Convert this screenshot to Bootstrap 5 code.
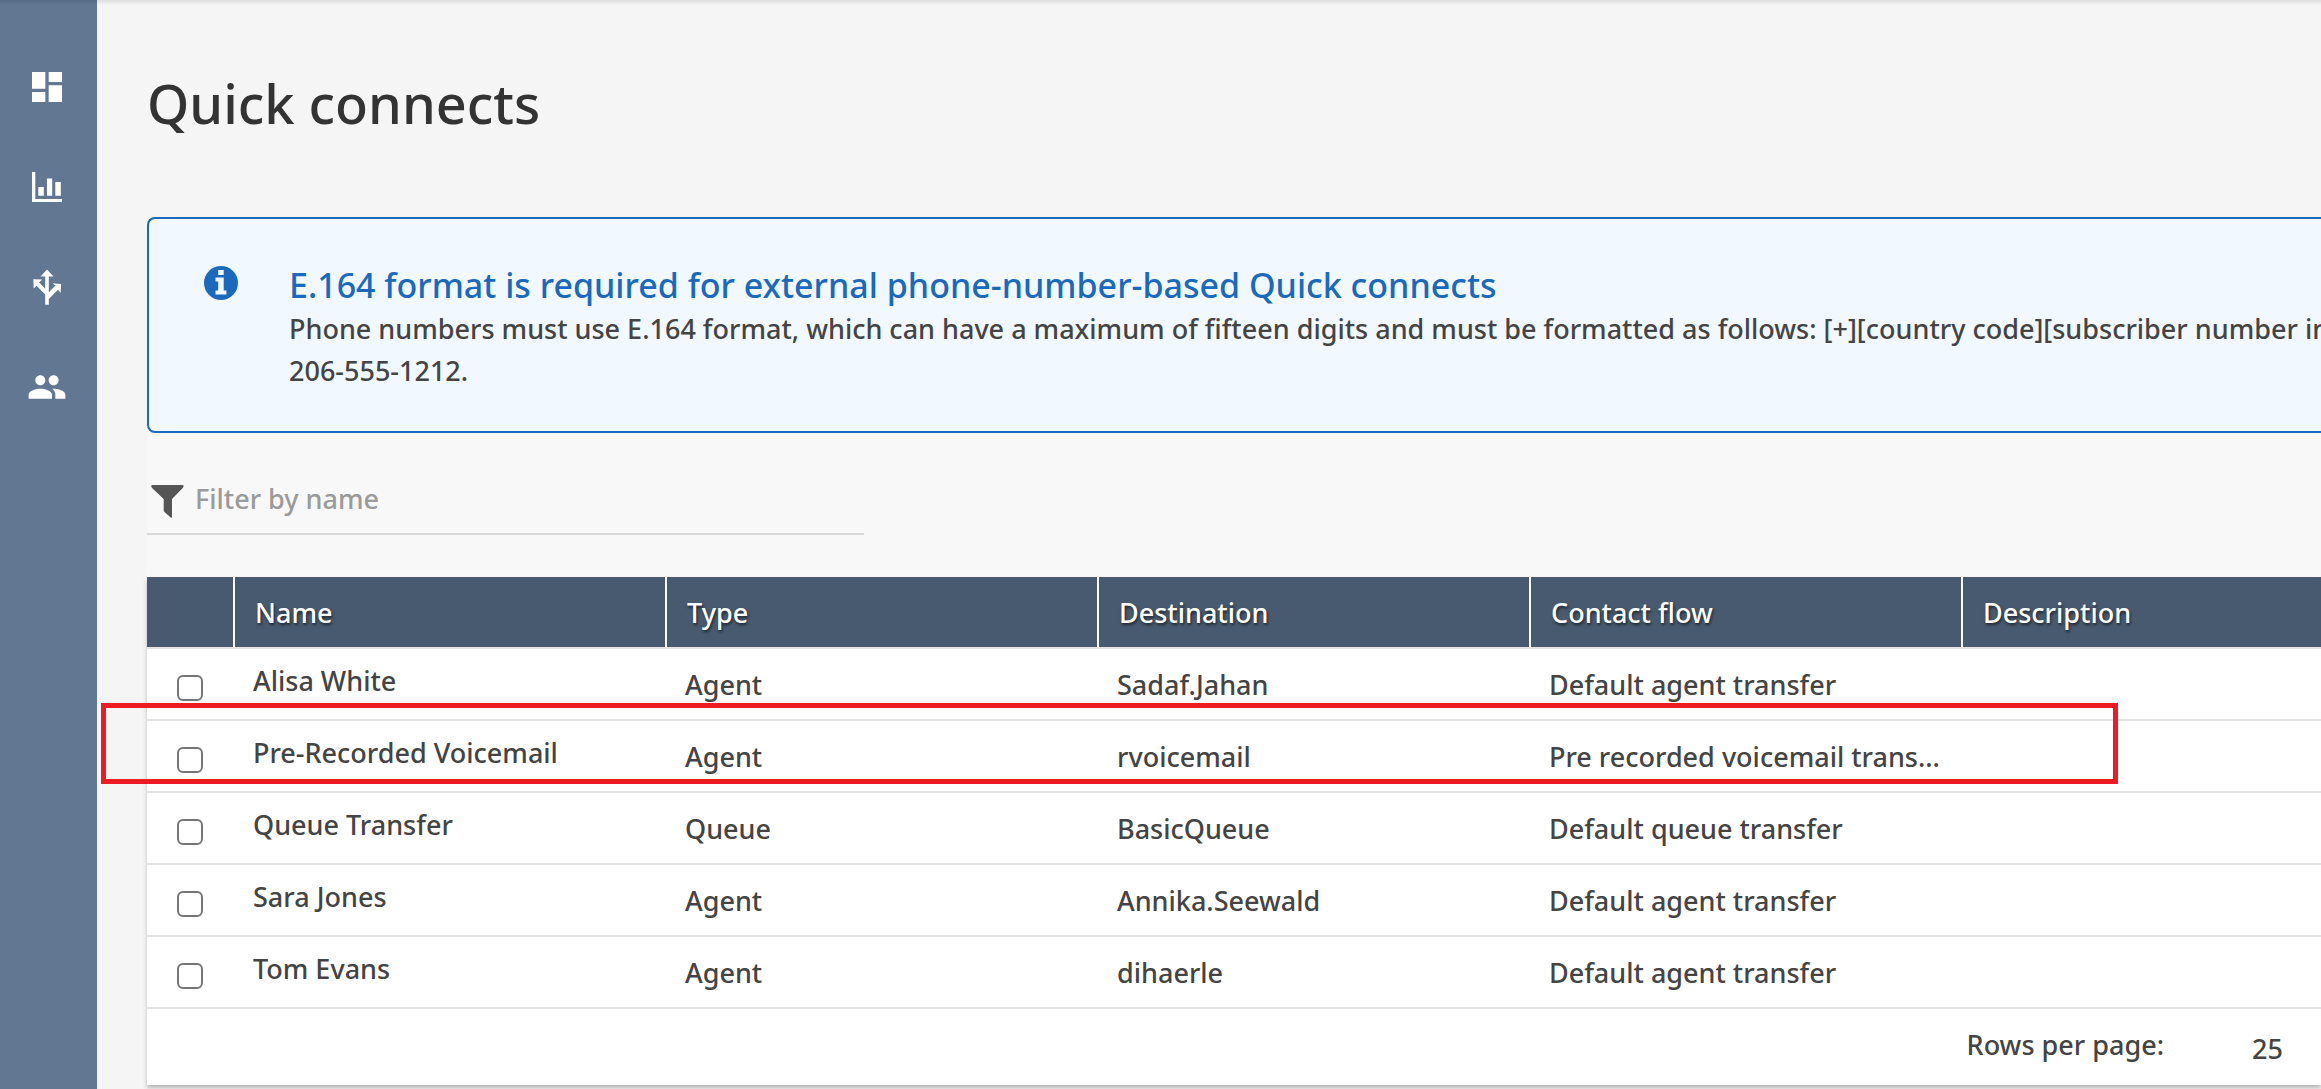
<!DOCTYPE html>
<html lang="en">
<head>
<meta charset="utf-8">
<meta name="viewport" content="width=device-width, initial-scale=1">
<title>Quick connects</title>
<link href="https://cdn.jsdelivr.net/npm/bootstrap@5.3.0/dist/css/bootstrap.min.css" rel="stylesheet">
<style>
  body { font-family: "Noto Sans", "Open Sans", sans-serif; font-size: 27px; font-weight: 500; line-height: 42px; color: #444; background: #f5f5f5; }
  .topbar-shadow { position: absolute; inset: 0 0 auto 0; height: 5px; background: linear-gradient(rgba(0,0,0,.1), rgba(0,0,0,0)); z-index: 5; }
  .side-nav { width: 97px; background: #617792; padding: 37px 3px 0 0; }
  .side-nav .nav-link { height: 100px; color: #fff; }
  .side-nav svg { width: 40px; height: 40px; fill: currentColor; }
  .page-main { min-width: 0; padding-left: 50px; }
  .page-title { font-size: 54px; line-height: 70px; font-weight: 500; color: #333; padding-top: 68px; margin-bottom: 79px; }
  .panel-area { background: #f8f8f8; }
  .notice { background: #f1f8ff; border: 2px solid #1a69bd; border-right: 0; border-radius: 8px 0 0 8px; padding: 43px 0 39px 55px; color: #444; margin: 0; gap: 51px; }
  .notice svg { width: 34px; height: 34px; margin-top: 4px; }
  .notice-title { font-size: 34px; line-height: 46px; font-weight: 500; color: #1a69bd; margin: 0; }
  .filter-box { width: 33%; margin-top: 36px; padding: 9px 0 13px 4px; border-bottom: 2px solid #d8d8d8; gap: 11px; }
  .filter-box svg { width: 33px; height: 33px; margin-top: 4px; }
  .filter-box input { font-size: 27px; font-weight: 500; line-height: 42px; height: 42px; padding: 0; color: #444; }
  .filter-box input::placeholder { color: #9a9a9a; }
  .table-panel { margin-top: 42px; background: #fff; box-shadow: 0 3px 4px rgba(0,0,0,.25); }
  .qc-table { table-layout: fixed; border-collapse: separate; border-spacing: 0; margin: 0; width: 100%; }
  .qc-table th { font-weight: 500; color: #fff; background: #485a6f; padding: 15px 20px 13px; text-shadow: 1px 2px 3px rgba(0,0,0,.6); }
  .qc-table th + th { border-left: 2px solid #fff; }
  .qc-table td { border-top: 2px solid #e5e5e5; padding: 15px 20px 13px; vertical-align: top; }
  .qc-table .name-cell { padding-top: 11px; }
  .qc-table .pick-cell { padding: 26px 30px 0; }
  .qc-table .form-check-input { width: 26px; height: 26px; margin: 0; border: 2px solid #767676; border-radius: 6px; }
  .col-pick { width: 86px; }
  .col-data { width: 432px; }
  .table-foot { border-top: 2px solid #e5e5e5; padding: 15px 38px 15px 0; gap: 88px; }
  .table-foot select { font-size: 27px; font-weight: 500; line-height: 42px; padding: 0; width: auto; color: #444; margin-top: 4px; appearance: none; }
  .highlight-frame { position: absolute; left: -46px; right: 203px; top: 126px; height: 81px; border: 5px solid #ed1c24; pointer-events: none; }
</style>
</head>
<body>
<div class="topbar-shadow"></div>
<div class="d-flex min-vh-100 overflow-hidden">
  <nav class="side-nav nav flex-column flex-nowrap flex-shrink-0" aria-label="Main">
    <a class="nav-link d-flex align-items-center justify-content-center p-0" href="#" aria-label="Dashboard">
      <svg viewBox="0 0 24 24"><path d="M3 13h8V3H3v10zm0 8h8v-6H3v6zm10 0h8V11h-8v10zm0-18v6h8V3h-8z"/></svg>
    </a>
    <a class="nav-link d-flex align-items-center justify-content-center p-0" href="#" aria-label="Metrics">
      <svg viewBox="0 0 40 40"><path d="M5 5h3.300v27H35v3H5zM11.300 20h5.500v8.700h-5.500zM20 11.500h5.200v17.200H20zM28.300 15h5.500v13.700h-5.500z"/></svg>
    </a>
    <a class="nav-link d-flex align-items-center justify-content-center p-0" href="#" aria-label="Routing">
      <svg viewBox="0 0 40 40"><path d="M20 2.500l6.500 7h-4.700v15.700l6.700-6.700-3-2.300L34 17l-.300 9-2.700-3.200-9.200 9.200v5.700h-3.600V27.500L9.500 18.800 6.700 21.500 6.300 12.300l8.900.3-3 3 6 6.200V9.500h-4.700z"/></svg>
    </a>
    <a class="nav-link d-flex align-items-center justify-content-center p-0" href="#" aria-label="Users">
      <svg viewBox="0 0 24 24"><path d="M16 11c1.660 0 2.990-1.340 2.990-3S17.660 5 16 5c-1.660 0-3 1.340-3 3s1.340 3 3 3zm-8 0c1.660 0 2.990-1.340 2.990-3S9.660 5 8 5C6.340 5 5 6.340 5 8s1.340 3 3 3zm0 2c-2.330 0-7 1.170-7 3.500V19h14v-2.500c0-2.330-4.670-3.500-7-3.500zm8 0c-.290 0-.620.020-.970.050 1.160.840 1.970 1.970 1.970 3.450V19h6v-2.500c0-2.330-4.670-3.500-7-3.500z"/></svg>
    </a>
  </nav>

  <main class="page-main flex-grow-1">
    <h1 class="page-title">Quick connects</h1>

    <div class="panel-area">
      <div class="alert notice d-flex align-items-start" role="alert">
        <svg class="flex-shrink-0" viewBox="0 0 34 34" aria-hidden="true"><circle cx="17" cy="17" r="17" fill="#1a69bd"/><path fill="#f1f8ff" d="M14.200 4h5.500v5h-5.500zM11.500 11.500h8.200v13h2.700v4H11.500v-4h2.700v-9h-2.700z"/></svg>
        <div class="text-nowrap">
          <h2 class="notice-title">E.164 format is required for external phone-number-based Quick connects</h2>
          <p class="m-0">Phone numbers must use E.164 format, which can have a maximum of fifteen digits and must be formatted as follows: [+][country code][subscriber number incl<br>206-555-1212.</p>
        </div>
      </div>

      <div class="filter-box d-flex align-items-center">
        <svg class="flex-shrink-0" viewBox="0 0 33 33" aria-hidden="true"><path fill="#555" d="M1.500 0h30q1.500 0 1 1.500-.3 1-1 1.700L21 14v18q0 1-1 .8L13.500 27q-.8-.7-.8-1.500V14L1.300 3.200Q.6 2.500.300 1.500 0 0 1.500 0z"/></svg>
        <input type="text" class="form-control border-0 bg-transparent shadow-none rounded-0" placeholder="Filter by name" aria-label="Filter by name">
      </div>

      <div class="table-panel position-relative">
        <table class="qc-table">
          <colgroup><col class="col-pick"><col class="col-data"><col class="col-data"><col class="col-data"><col class="col-data"><col></colgroup>
          <thead>
            <tr><th aria-label="Select"></th><th scope="col">Name</th><th scope="col">Type</th><th scope="col">Destination</th><th scope="col">Contact flow</th><th scope="col">Description</th></tr>
          </thead>
          <tbody>
            <tr><td class="pick-cell"><input class="form-check-input d-block" type="checkbox" aria-label="Select Alisa White"></td><td class="name-cell">Alisa White</td><td>Agent</td><td>Sadaf.Jahan</td><td class="text-truncate">Default agent transfer</td><td></td></tr>
            <tr><td class="pick-cell"><input class="form-check-input d-block" type="checkbox" aria-label="Select Pre-Recorded Voicemail"></td><td class="name-cell">Pre-Recorded Voicemail</td><td>Agent</td><td>rvoicemail</td><td class="text-truncate">Pre recorded voicemail trans…</td><td></td></tr>
            <tr><td class="pick-cell"><input class="form-check-input d-block" type="checkbox" aria-label="Select Queue Transfer"></td><td class="name-cell">Queue Transfer</td><td>Queue</td><td>BasicQueue</td><td class="text-truncate">Default queue transfer</td><td></td></tr>
            <tr><td class="pick-cell"><input class="form-check-input d-block" type="checkbox" aria-label="Select Sara Jones"></td><td class="name-cell">Sara Jones</td><td>Agent</td><td>Annika.Seewald</td><td class="text-truncate">Default agent transfer</td><td></td></tr>
            <tr><td class="pick-cell"><input class="form-check-input d-block" type="checkbox" aria-label="Select Tom Evans"></td><td class="name-cell">Tom Evans</td><td>Agent</td><td>dihaerle</td><td class="text-truncate">Default agent transfer</td><td></td></tr>
          </tbody>
        </table>
        <div class="table-foot d-flex justify-content-end align-items-start">
          <label for="rows-per-page">Rows per page:</label>
          <select id="rows-per-page" class="border-0 bg-transparent"><option>25</option></select>
        </div>
        <div class="highlight-frame"></div>
      </div>
    </div>
  </main>
</div>
<script src="https://cdn.jsdelivr.net/npm/bootstrap@5.3.0/dist/js/bootstrap.bundle.min.js"></script>
</body>
</html>
